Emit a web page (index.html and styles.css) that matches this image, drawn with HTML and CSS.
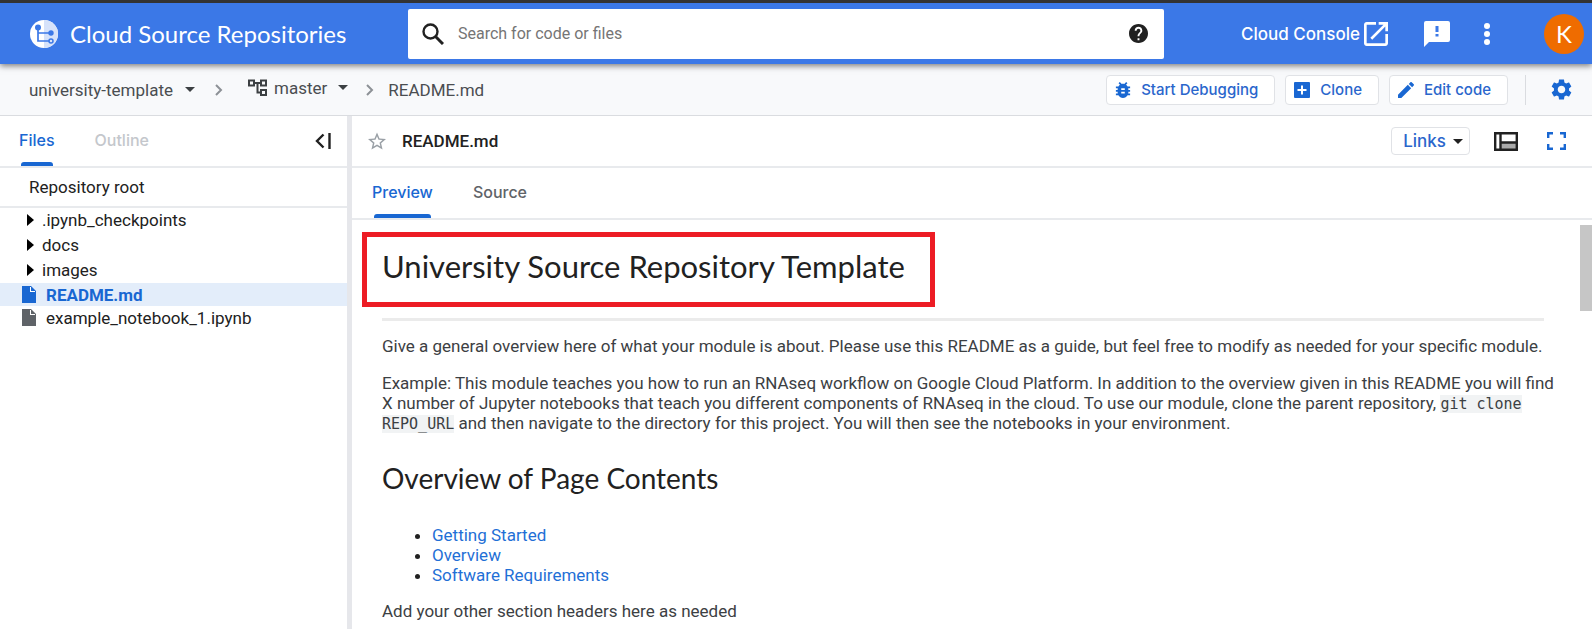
FILE: index.html
```html
<!DOCTYPE html>
<html lang="en">
<head>
<meta charset="utf-8">
<title>Cloud Source Repositories</title>
<link rel="stylesheet" href="styles.css">
</head>
<body>
<header class="app-bar">
  <div class="brand">
    <svg class="brand-logo" viewBox="0 0 28 28" aria-hidden="true">
      <circle cx="14" cy="14" r="14" fill="#fff"/>
      <path d="M14 0a14 14 0 0 1 0 28z" fill="#d6e2fa"/>
      <path d="M8 7v14h12M8 13h12" fill="none" stroke="#3b78e7" stroke-width="1.7"/>
      <circle cx="8" cy="7.500" r="3" fill="#3b78e7"/>
      <circle cx="21" cy="13" r="2.700" fill="#3b78e7"/>
      <circle cx="21" cy="21" r="2" fill="#d6e2fa" stroke="#3b78e7" stroke-width="1.500"/>
    </svg>
    <span class="brand-name">Cloud Source Repositories</span>
  </div>
  <form class="search" role="search">
    <svg class="search-icon" viewBox="0 0 22 22" aria-hidden="true"><circle cx="8.500" cy="8.500" r="7" fill="none" stroke="#212121" stroke-width="2.400"/><path d="M13.500 13.500l7.500 7.500" stroke="#212121" stroke-width="3"/></svg>
    <input class="search-input" type="search" aria-label="Search for code or files" placeholder="Search for code or files">
    <button class="icon-btn" type="button" aria-label="Help">
      <svg class="help-icon" viewBox="2 2 20 20"><path fill="#212121" d="M12 2C6.480 2 2 6.480 2 12s4.480 10 10 10 10-4.480 10-10S17.520 2 12 2zm1 17h-2v-2h2v2zm2.070-7.750l-.9.920C13.450 12.900 13 13.500 13 15h-2v-.5c0-1.100.450-2.100 1.170-2.830l1.240-1.260c.370-.360.590-.860.590-1.410 0-1.100-.9-2-2-2s-2 .9-2 2H8c0-2.210 1.790-4 4-4s4 1.790 4 4c0 .880-.360 1.680-.930 2.250z"/></svg>
    </button>
  </form>
  <div class="account">
    <a class="console-link" href="#">Cloud Console
      <svg class="open-icon" viewBox="3 3 18 18" aria-hidden="true"><path fill="#fff" d="M19 19H5V5h7V3H5c-1.110 0-2 .9-2 2v14c0 1.100.890 2 2 2h14c1.100 0 2-.9 2-2v-7h-2v7zM14 3v2h3.590l-9.830 9.830 1.410 1.410L19 6.410V10h2V3h-7z"/></svg>
    </a>
    <button class="icon-btn feedback" type="button" aria-label="Send feedback">
      <svg class="feedback-icon" viewBox="0 0 26 26"><path fill="#fff" d="M2 0h22a2 2 0 0 1 2 2v17a2 2 0 0 1-2 2H5l-5 5V2a2 2 0 0 1 2-2z"/><path fill="#3b78e7" d="M11.500 5h3v6h-3zM11.500 13h3v2.500h-3z"/></svg>
    </button>
    <button class="icon-btn more" type="button" aria-label="More options">
      <svg class="more-icon" viewBox="0 0 6 22"><circle cx="3" cy="3" r="3" fill="#fff"/><circle cx="3" cy="11" r="3" fill="#fff"/><circle cx="3" cy="19" r="3" fill="#fff"/></svg>
    </button>
    <button class="avatar" type="button">K</button>
  </div>
</header>

<nav class="toolbar" aria-label="Repository">
  <button class="crumb" type="button">university-template <span class="caret"></span></button>
  <svg class="chevron" viewBox="0 0 8 12" aria-hidden="true"><path d="M1 1l5 5-5 5" fill="none" stroke="#8d9196" stroke-width="2"/></svg>
  <button class="crumb crumb-branch" type="button">
    <svg class="branch-icon" viewBox="0 0 20 18" aria-hidden="true"><path d="M1 1.500h5v5H1zM13 1.500h5v5h-5zM13 11h5v5h-5zM6 4h7M9.500 4v9.500H13" fill="none" stroke="#3c4043" stroke-width="2"/></svg>
    master <span class="caret"></span>
  </button>
  <svg class="chevron" viewBox="0 0 8 12" aria-hidden="true"><path d="M1 1l5 5-5 5" fill="none" stroke="#8d9196" stroke-width="2"/></svg>
  <span class="crumb-file">README.md</span>
  <div class="actions">
    <button class="action" type="button">
      <svg class="action-icon" viewBox="3 3 18 18" aria-hidden="true"><path fill="#1967d2" d="M20 8h-2.810c-.450-.780-1.070-1.450-1.820-1.960L17 4.410 15.590 3l-2.170 2.170C12.960 5.060 12.490 5 12 5s-.960.060-1.410.170L8.410 3 7 4.410l1.620 1.630C7.880 6.550 7.260 7.220 6.810 8H4v2h2.090c-.050.330-.090.660-.090 1v1H4v2h2v1c0 .340.040.670.090 1H4v2h2.810c1.040 1.790 2.970 3 5.190 3s4.150-1.210 5.190-3H20v-2h-2.090c.050-.330.090-.660.090-1v-1h2v-2h-2v-1c0-.340-.040-.670-.090-1H20V8zm-6 8h-4v-2h4v2zm0-4h-4v-2h4v2z"/></svg>
      Start Debugging
    </button>
    <button class="action" type="button">
      <svg class="action-icon" viewBox="0 0 16 16" aria-hidden="true"><rect width="16" height="16" rx="1" fill="#1967d2"/><path d="M8 3.500v9M3.500 8h9" stroke="#fff" stroke-width="2"/></svg>
      Clone
    </button>
    <button class="action" type="button">
      <svg class="action-icon" viewBox="3 3 18 18" aria-hidden="true"><path fill="#1967d2" d="M3 17.250V21h3.750L17.810 9.940l-3.750-3.750L3 17.250zM20.710 7.040c.390-.390.390-1.020 0-1.410l-2.340-2.340c-.390-.390-1.020-.390-1.410 0l-1.830 1.830 3.750 3.750 1.830-1.830z"/></svg>
      Edit code
    </button>
    <span class="separator"></span>
    <button class="icon-btn" type="button" aria-label="Settings">
      <svg class="gear-icon" viewBox="2 2 20 20"><path fill="#1967d2" d="M19.140 12.940c.040-.3.060-.610.060-.940 0-.320-.020-.640-.070-.940l2.030-1.580c.180-.140.230-.410.120-.610l-1.920-3.320c-.120-.220-.370-.290-.590-.220l-2.390.960c-.5-.380-1.030-.7-1.620-.940l-.360-2.540c-.040-.240-.240-.410-.480-.410h-3.840c-.240 0-.430.170-.470.410l-.360 2.540c-.590.240-1.130.570-1.620.940l-2.390-.960c-.220-.080-.470 0-.590.220L2.740 8.870c-.120.210-.080.470.120.610l2.030 1.580c-.050.3-.090.630-.090.940s.020.640.070.940l-2.030 1.580c-.180.140-.230.410-.120.610l1.920 3.320c.120.220.370.290.590.220l2.390-.960c.5.380 1.030.7 1.620.940l.360 2.540c.050.240.240.410.480.410h3.840c.240 0 .440-.170.470-.410l.360-2.540c.590-.240 1.130-.560 1.620-.940l2.390.960c.220.080.470 0 .590-.220l1.920-3.320c.120-.220.070-.470-.120-.610l-2.010-1.580zM12 15.600c-1.980 0-3.600-1.620-3.600-3.600s1.620-3.600 3.600-3.600 3.600 1.620 3.600 3.600-1.620 3.600-3.600 3.600z"/></svg>
    </button>
  </div>
</nav>

<div class="workspace">
  <aside class="sidebar">
    <div class="side-tabs">
      <button class="tab tab-active" type="button">Files</button>
      <button class="tab tab-muted" type="button">Outline</button>
      <button class="icon-btn collapse" type="button" aria-label="Collapse panel">
        <svg class="collapse-icon" viewBox="0 0 16 16"><path d="M8.500 1.500L2 8l6.500 6.500M14.500 0v16" fill="none" stroke="#212121" stroke-width="2.400"/></svg>
      </button>
    </div>
    <div class="root">Repository root</div>
    <ul class="tree">
      <li class="folder"><span class="arrow"></span>.ipynb_checkpoints</li>
      <li class="folder"><span class="arrow"></span>docs</li>
      <li class="folder"><span class="arrow"></span>images</li>
      <li class="file file-selected"><svg class="file-icon" viewBox="0 0 14 17" aria-hidden="true"><path fill="#1967d2" d="M0 0h9l5 5v12H0z"/><path fill="#fff" d="M8 1v5h5v-1H9V1z"/></svg>README.md</li>
      <li class="file"><svg class="file-icon" viewBox="0 0 14 17" aria-hidden="true"><path fill="#5f6368" d="M0 0h9l5 5v12H0z"/><path fill="#fff" d="M8 1v5h5v-1H9V1z"/></svg>example_notebook_1.ipynb</li>
    </ul>
  </aside>

  <main class="viewer">
    <div class="file-bar">
      <button class="icon-btn" type="button" aria-label="Star file">
        <svg class="star-icon" viewBox="2 2 20 19"><path fill="#9aa0a6" d="M22 9.240l-7.190-.620L12 2 9.190 8.630 2 9.240l5.460 4.730L5.820 21 12 17.270 18.180 21l-1.630-7.030L22 9.240zM12 15.400l-3.760 2.270 1-4.280-3.320-2.880 4.380-.380L12 6.100l1.710 4.040 4.380.380-3.320 2.880 1 4.280L12 15.400z"/></svg>
      </button>
      <span class="file-name">README.md</span>
      <div class="file-tools">
        <button class="links" type="button">Links <span class="caret caret-dark"></span></button>
        <button class="icon-btn" type="button" aria-label="Toggle layout">
          <svg class="layout-icon" viewBox="0 0 24 19"><path fill="#aaa" d="M7 11h15v6H7z"/><path d="M1.200 1.200h21.600v16.600H1.200zM6.500 1v17M6.500 10.500H23" fill="none" stroke="#212121" stroke-width="2.400"/></svg>
        </button>
        <button class="icon-btn" type="button" aria-label="Full screen">
          <svg class="full-icon" viewBox="0 0 19 18"><path d="M1.200 6V1.200H6M13 1.200h4.800V6M17.800 12v4.800H13M6 16.800H1.200V12" fill="none" stroke="#1967d2" stroke-width="2.400"/></svg>
        </button>
      </div>
    </div>
    <div class="view-tabs">
      <button class="tab tab-active" type="button">Preview</button>
      <button class="tab" type="button">Source</button>
    </div>
    <div class="scroller">
      <article class="readme">
        <h1 class="title">University Source Repository Template</h1>
        <div class="prose">
          <hr class="rule">
          <p class="text">Give a general overview here of what your module is about. Please use this README as a guide, but feel free to modify as needed for your specific module.</p>
          <p class="text">Example: This module teaches you how to run an RNAseq workflow on Google Cloud Platform. In addition to the overview given in this README you will find X number of Jupyter notebooks that teach you different components of RNAseq in the cloud. To use our module, clone the parent repository, <code class="code">git clone REPO_URL</code> and then navigate to the directory for this project. You will then see the notebooks in your environment.</p>
          <h2 class="subtitle">Overview of Page Contents</h2>
          <ul class="contents">
            <li><a class="link" href="#">Getting Started</a></li>
            <li><a class="link" href="#">Overview</a></li>
            <li><a class="link" href="#">Software Requirements</a></li>
          </ul>
          <p class="text">Add your other section headers here as needed</p>
        </div>
      </article>
      <div class="track"><div class="thumb"></div></div>
    </div>
  </main>
</div>
</body>
</html>
```
FILE: styles.css
```css
* { box-sizing: border-box; }

body {
  margin: 0;
  min-height: 100vh;
  display: flex;
  flex-direction: column;
  border-top: 3px solid #333;
  border-bottom: 1px solid #b5b5b5;
  background: #fff;
  color: #212121;
  font: 17px/20px Roboto, sans-serif;
}

button {
  margin: 0;
  padding: 0;
  border: 0;
  background: none;
  color: inherit;
  font: inherit;
  cursor: pointer;
}

svg { display: block; flex: none; }
.icon-btn { display: flex; align-items: center; }

/* App bar */
.app-bar {
  display: flex;
  align-items: center;
  height: 61px;
  background: #3b78e7;
  box-shadow: 0 2px 6px rgba(0, 0, 0, .5);
  position: relative;
  color: #fff;
}
.brand { flex: 0 0 408px; display: flex; align-items: center; gap: 12px; padding-left: 30px; }
.brand-logo { width: 28px; height: 28px; }
.brand-name { font: 24px/30px Lato, sans-serif; white-space: nowrap; }
.search {
  flex: 1;
  display: flex;
  align-items: center;
  height: 50px;
  padding: 0 16px 0 14px;
  border-radius: 2px;
  background: #fff;
}
.search-icon { width: 22px; height: 22px; }
.search-input {
  flex: 1;
  margin: 0 14px;
  padding: 0;
  border: 0;
  outline: 0;
  background: none;
  color: #212121;
  font: 16px/20px Roboto, sans-serif;
}
.search-input::placeholder { color: #757575; opacity: 1; }
.help-icon { width: 19px; height: 19px; }
.account { flex: 0 0 428px; display: flex; align-items: center; justify-content: flex-end; padding-right: 8px; }
.console-link {
  display: flex;
  align-items: center;
  gap: 4px;
  color: #fff;
  font: 500 17px/24px Inter, sans-serif;
  text-decoration: none;
}
.open-icon { width: 24px; height: 24px; }
.feedback { margin-left: 36px; }
.feedback-icon { width: 26px; height: 26px; }
.more { margin: 0 54px 0 34px; }
.more-icon { width: 6px; height: 22px; }
.avatar {
  width: 40px;
  height: 40px;
  border-radius: 50%;
  background: #ef6c00;
  color: #fff;
  font: 24px/40px Lato, sans-serif;
}

/* Breadcrumb toolbar */
.toolbar {
  display: flex;
  align-items: center;
  height: 52px;
  padding: 0 20px 0 29px;
  border-bottom: 1px solid #dadce0;
  background: #f8f9fb;
  color: #4a4d51;
}
.crumb { display: flex; align-items: center; }
.crumb-branch { margin-bottom: 4px; gap: 6px; }
.branch-icon { width: 20px; height: 18px; }
.caret {
  border: 5px solid transparent;
  border-top-color: #3c4043;
  border-bottom: 0;
  margin-left: 12px;
}
.crumb-branch .caret { margin-left: 5px; }
.chevron { width: 8px; height: 12px; margin: 0 14px 0 18px; }
.chevron:first-of-type { margin: 0 25px 0 20px; }
.actions { margin-left: auto; display: flex; align-items: center; gap: 10px; }
.action {
  display: flex;
  align-items: center;
  gap: 10px;
  height: 30px;
  padding: 0 16px 0 8px;
  border: 1px solid #e0e2e6;
  border-radius: 4px;
  background: #fff;
  color: #2a66cc;
  font: 500 15px/20px Inter, sans-serif;
}
.action-icon { width: 16px; height: 16px; }
.separator { width: 1px; height: 30px; margin: 0 15px 0 7px; background: #dadce0; }
.gear-icon { width: 21px; height: 21px; }

/* Panels */
.workspace { flex: 1; display: flex; }
.sidebar { flex: 0 0 352px; border-right: 5px solid #e6e7eb; }
.viewer { flex: 1; min-width: 0; display: flex; flex-direction: column; }

.tab {
  position: relative;
  align-self: stretch;
  padding-bottom: 2px;
  color: #5f6368;
  font: 500 16px/20px Inter, sans-serif;
}
.tab-active { color: #1967d2; }
.tab-muted { color: #c4c7cc; }
.tab-active::after {
  content: "";
  position: absolute;
  inset: auto 2px 0;
  height: 4px;
  border-radius: 3px 3px 0 0;
  background: #1967d2;
}

.side-tabs, .file-bar, .view-tabs {
  display: flex;
  align-items: center;
  height: 52px;
  border-bottom: 2px solid #e8eaed;
}
.side-tabs { gap: 40px; padding: 0 16px 0 19px; }
.collapse { margin-left: auto; }
.collapse-icon { width: 16px; height: 16px; }
.root { padding: 9px 29px 9px; border-bottom: 2px solid #e8eaed; }
.tree { margin: 0; padding: 0; list-style: none; }
.folder { display: flex; align-items: center; gap: 8px; height: 25px; padding: 0 0 2px 27px; }
.arrow { border: 6px solid transparent; border-left: 7px solid #000; border-right: 0; }
.file { display: flex; align-items: center; gap: 10px; height: 23px; padding-left: 22px; }
.file-icon { width: 14px; height: 17px; }
.file-selected { background: #e3edfa; color: #1967d2; font-weight: 700; }

.file-bar { gap: 16px; padding: 0 26px 0 16px; }
.star-icon { width: 18px; height: 18px; }
.file-name { font-weight: 500; }
.file-tools { margin-left: auto; display: flex; align-items: center; gap: 29px; }
.links {
  display: flex;
  align-items: center;
  height: 28px;
  padding: 0 6px 0 11px;
  margin-right: -5px;
  border: 1px solid #e0e2e6;
  border-radius: 4px;
  color: #2a66cc;
  font: 500 17px/20px Inter, sans-serif;
}
.links .caret { margin-left: 7px; border-top-color: #212121; }
.layout-icon { width: 24px; height: 19px; }
.full-icon { width: 19px; height: 18px; }
.view-tabs { gap: 40px; padding: 0 20px; }

/* README */
.scroller { flex: 1; display: flex; }
.readme { flex: 1; min-width: 0; padding: 12px 20px 0 10px; }
.title {
  width: fit-content;
  margin: 0;
  padding: 13px 25px 20px 15px;
  border: 5px solid #ed1c24;
  font: 400 31px/32px Lato, sans-serif;
}
.prose { padding-left: 20px; color: #3c4043; }
.rule { margin: 11px 16px 15px 0; border: 0; height: 3px; background: #ebebeb; }
.text { margin: 0 0 17px; }
.code { background: #f1f3f4; font: 15px/16px "DejaVu Sans Mono", monospace; }
.subtitle { margin: 26px 0 28px; color: #212121; font: 400 28px/38px Lato, sans-serif; }
.contents { margin: 0 0 16px; padding-left: 50px; }
.contents li::marker { color: #212121; }
.link { color: #1f6fd6; text-decoration: none; }
.track { flex: none; width: 12px; padding-top: 5px; }
.thumb { height: 86px; background: #c6c6c6; }
```
